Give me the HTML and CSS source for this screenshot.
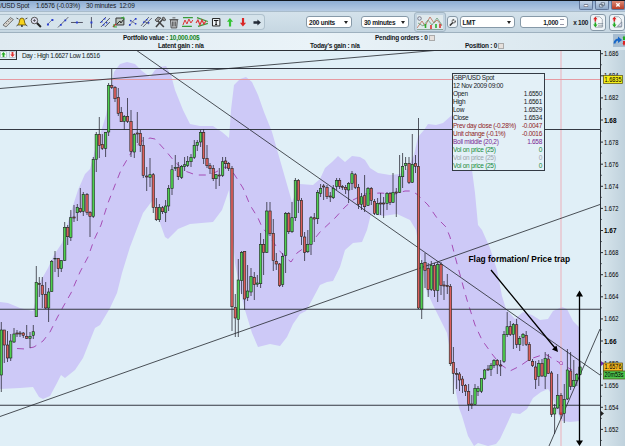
FILE: index.html
```html
<!DOCTYPE html>
<html lang="en">
  <head>
    <meta charset="UTF-8" />
    <meta name="viewport" content="width=device-width, initial-scale=1.0" />
    <title>GBP/USD Spot</title>
    <link rel="stylesheet" href="styles.css">
  </head>
  <body>
    <header class="titlebar">
      <span class="title-name">P/USD Spot</span>
      <span class="title-price">1.6576 (-0.03%)</span>
      <span class="title-time">30 minutes&nbsp; 12:09</span>
      <div class="window-buttons">
        <button aria-label="Minimize"><svg viewBox="0 0 14 9"><path d="M4.500 5.500h5" stroke="#556" stroke-width="3"/><path d="M5 5.500h4" stroke="#fff" stroke-width="1.600"/></svg></button>
        <button aria-label="Restore"><svg viewBox="0 0 14 9"><path d="M6 2h4v3H6zM4 4h4v3H4z" fill="#dfe8f1" stroke="#4c5a6c" stroke-width=".8"/></svg></button>
        <button class="close" aria-label="Close"><svg viewBox="0 0 14 9"><path d="M5 2.500l4 4M9 2.500l-4 4" stroke="#fff" stroke-width="1.600"/></svg></button>
      </div>
    </header>

    <div class="toolbar">
      <div class="tools">
        <svg viewBox="0 0 14 14"><path d="M2 10L9.500 2.500l3 2L5 12z" fill="#d5d2cc" stroke="#666" stroke-width=".9"/><path d="M5 8l1 1M7 6l1 1M9 4l1 1" stroke="#555" stroke-width=".6"/></svg>
        <svg viewBox="0 0 14 14"><path d="M3 10Q4.500 8 4.500 6a2.500 3 0 0 1 5 0q0 2 1.500 4z" fill="#f5d21c" stroke="#6d5a10" stroke-width=".9"/><path d="M1.500 3l2 1M12.500 3l-2 1M1.500 11l1.500-1M12.500 11L11 10" stroke="#222" stroke-width=".8"/><circle cx="7" cy="11" r="1" fill="#333"/></svg>
        <svg viewBox="0 0 14 14"><circle cx="5.500" cy="5.500" r="3.300" fill="#dde" stroke="#555"/><path d="M8 8l4 4" stroke="#222" stroke-width="2"/><path d="M4 5.500h3M5.500 4v3" stroke="#444" stroke-width=".7"/></svg>
        <svg viewBox="0 0 14 14"><path d="M5 9l4-4" stroke="#557" stroke-width=".7"/><path d="M4 8.500h2v2H4zM8.500 4h2v2h-2z" fill="#2a3fd0"/></svg>
        <svg viewBox="0 0 14 14"><path d="M2 12.500L12.500 2" stroke="#445" stroke-width=".8"/><path d="M4 9h1.800v1.800H4zM8.500 4.500h1.800v1.800H8.500z" fill="#2a3fd0"/></svg>
        <svg viewBox="0 0 14 14"><path d="M1 7.500h12" stroke="#334" stroke-width=".8"/><path d="M6 6.500h2v2H6z" fill="#2a3fd0"/></svg>
        <svg viewBox="0 0 14 14"><path d="M7.500 2v11" stroke="#334" stroke-width=".8"/><path d="M6.500 6.500h2v2h-2z" fill="#2a3fd0"/></svg>
        <svg viewBox="0 0 14 14"><path d="M2 8l6-6M3 12l9-9M7 12l5-5" stroke="#445" stroke-width=".9"/><path d="M3 6h1.500v1.500H3zM8 7h1.500v1.500H8zM5 9h1.500v1.500H5zM6 3h1.500v1.500H6z" fill="#2a3fd0"/></svg>
        <svg viewBox="0 0 14 14"><path d="M4 3h8v7H4z" fill="#bbc5c0" stroke="#333"/><path d="M5 9l3-3 1 2 3-4" stroke="#222" fill="none"/><path d="M1 12l3-3" stroke="#c33" stroke-width="1.500"/><path d="M9 3l3-1v3M2 9v3h3" stroke="#3a3" fill="none"/></svg>
        <svg viewBox="0 0 14 14"><path d="M3 11l7-8M4 5l6 4" stroke="#557" stroke-width=".7"/><path d="M3 9h1.700v1.700H3zM9 3h1.700v1.700H9zM4 5h1.500v1.500H4zM9 8h1.500v1.500H9z" fill="#2a3fd0"/></svg>
        <svg viewBox="0 0 14 14"><path d="M2 11l8-9M4 12l9-9M5 6l5 3" stroke="#445" stroke-width=".8"/><path d="M4 6.500h1.500V8H4zM7 4h1.500v1.500H7zM9 7h1.500v1.500H9z" fill="#2a3fd0"/></svg>
        <svg viewBox="0 0 14 14"><path d="M3 12l7-8M4 5l7 7" stroke="#444" stroke-width="1.600"/><path d="M2 5l3-3 3 1-4 4zM9 3l2-1 2 3-2 1z" fill="#999" stroke="#333" stroke-width=".7"/></svg>
        <svg viewBox="0 0 14 14"><path d="M3.500 5h7l-.7 8H4.200z" fill="#c9cdd0" stroke="#444" stroke-width=".9"/><path d="M2.500 4.500h9M5.500 2.800h3M5.500 6.500v5M7 6.500v5M8.500 6.500v5" stroke="#444" stroke-width=".8"/></svg>
        <svg viewBox="0 0 14 14"><path d="M2 2.500h10M1 11.500h10" stroke="#3a9b3a" stroke-width="1.300"/><path d="M2 10l2-5 2 4 2-5 2 4 2-3" stroke="#d33" fill="none"/></svg>
        <svg viewBox="0 0 14 14"><path d="M2 2.500l11 4M3 11.500l10-3" stroke="#3a9b3a" stroke-width="1.300"/><path d="M1 8l2-3 2 5 2-5 2 4 2-3" stroke="#d33" stroke-width="1.200" fill="none"/></svg>
        <svg viewBox="0 0 14 14"><path d="M3.500 3.500h7.500v7.500H3.500z" fill="#eef3f6" stroke="#222"/><path d="M5 5.500h4.500M7.200 5.500v4M6.200 9.500h2" stroke="#111" stroke-width="1"/></svg>
        <svg viewBox="0 0 14 14"><path d="M7 3L4 6.800h2V11.500h2.200V6.800h2z" fill="#35c435"/></svg>
        <svg viewBox="0 0 14 14"><path d="M7 11.500L4 7.800h2V3h2.200v4.800h2z" fill="#d92626"/></svg>
        <svg viewBox="0 0 14 14"><path d="M11 7.500L7.500 4.500v1.700H3.500v2.600h4v1.700z" fill="#222a36"/></svg>
      </div>
      <div class="select units">200 units<i></i></div>
      <div class="select period">30 minutes<i></i></div>
      <button class="chart-button" aria-label="Indicators"><svg viewBox="0 0 26 15"><path d="M0 13L5 6l3 5 5-9 4 6 3-3 5 6" fill="none" stroke="#bd6a55" stroke-width=".8"/><path d="M1 8l5 3 5-6 4 5 5-7 5 7" fill="none" stroke="#6a9a78" stroke-width=".8"/><path d="M8.500 9v4M19 9v4" stroke="#2cae2c" stroke-width="1.600"/><path d="M14 10v4M23 9v4" stroke="#d33" stroke-width="1.600"/><circle cx="2.500" cy="3.500" r="1.800" fill="#dce6f2" stroke="#667" stroke-width=".8"/><path d="M0 14.500h26" stroke="#687" stroke-width=".7"/></svg></button>
      <button class="wrench" aria-label="Settings"><svg viewBox="0 0 10 10"><path d="M2 8.500l4-4" stroke="#333" stroke-width="1.600"/><path d="M8.500 3.200A2 2 0 1 1 6.500 1.500L6.300 3l1 .6z" fill="#fff" stroke="#333" stroke-width=".8"/></svg></button>
      <div class="select order">LMT<i></i></div>
      <div class="quantity">1,000<i></i></div>
      <span class="times">x 100</span>
      <button class="ticket" aria-label="Buy"><svg viewBox="0 0 16 16"><path d="M5 2h5l3 3v9H5z" fill="#f5f7f8" stroke="#89929b" stroke-width=".8"/><path d="M8 10h6M8 12.500h6" stroke="#678" stroke-width=".8"/><path d="M5 2L2.500 5h1.600v2.500h1.800V5h1.600z" fill="#d22"/><path d="M5 14l-2.500-3h1.600V8.500h1.800V11h1.600z" fill="#2a2"/></svg></button>
      <button class="ticket last" aria-label="Sell"><svg viewBox="0 0 16 16"><path d="M5 2h5l3 3v9H5z" fill="#f5f7f8" stroke="#89929b" stroke-width=".8"/><path d="M8.500 13l5-5v5z" fill="#dde" stroke="#678" stroke-width=".8"/><path d="M5 2L2.500 5h1.600v2.500h1.800V5h1.600z" fill="#d22"/><path d="M5 14l-2.500-3h1.600V8.500h1.800V11h1.600z" fill="#2a2"/></svg></button>
    </div>

    <div class="account">
      <div class="account-col first">
        <p>Portfolio value : <b class="gain">10,000.00$</b></p>
        <p class="latent">Latent gain : n/a</p>
      </div>
      <div class="account-col today">
        <p>&nbsp;</p>
        <p>Today's gain : n/a</p>
      </div>
      <div class="account-col pending">
        <p>Pending orders : 0<i class="list-icon"></i></p>
        <p>&nbsp;</p>
      </div>
      <div class="account-col position">
        <p>&nbsp;</p>
        <p>Position : 0<i class="list-icon"></i></p>
      </div>
      <div class="switch"><svg viewBox="0 0 12 13"><path d="M1.500 9.500Q2 5.500 6 5.500" fill="none" stroke="#1767c8" stroke-width="2"/><path d="M5 2.500L9 6 5 9z" fill="#1767c8"/><path d="M11 1.500L9.500 4h3zM10 4h3v2h-3z" fill="#2a2"/><path d="M11 12L9.500 9h3zM10 7h3v2h-3z" fill="#d22"/></svg></div>
    </div>

    <main class="chart">
      <svg class="plot" id="plot" viewBox="0 0 625 396" width="625" height="396">
        <defs>
          <linearGradient id="axisFill" x1="0" x2="1" y1="0" y2="0">
            <stop offset="0" stop-color="#d8e6ed" />
            <stop offset="1" stop-color="#bfd1dc" />
          </linearGradient>
        </defs>
        <path class="band" d="M0 252L8 253 20 258 33 261 37 245 40 232 48 218 54 205 62 193 70 165 78 140 85 124 90 119 95 100 100 85 106 65 110 42 114 22 120 14 127 12 135 14 142 21 150 27 155 20 160 17 166 16 171 25 175 40 183 60 190 74 200 76 213 76 222 82 229 88 230 75 231 60 234 35 240 29 246 27 252 32 258 45 264 62 272 82 280 110 290 145 292 152 297 140 300 134 313 135 320 129 325 118 332 112 338 106 345 112 352 106 360 107 365 110 370 118 378 123 390 125 400 124 408 118 414 105 418 87 424 80 428 74 436 75 443 73 452 65 465 85 472 120 475 143 478 175 482 180 490 198 497 220 502 246 506 259 515 269 523 262 532 265 540 270 548 269 553 261 562 257 567 259 573 271 580 278 580 371 570 372 562 371 557 362 552 345 548 339 541 342 533 348 527 359 520 364 512 363 507 374 500 389 496 394 488 396 478 393 474 396 468 386 462 366 459 358 455 337 452 313 447 283 433 255 425 237 420 203 416 180 410 170 397 164 383 166 371 164 367 180 362 192 353 193 345 200 340 217 333 231 327 232 320 235 312 250 306 261 300 264 293 274 287 287 280 296 270 294 258 297 252 283 245 260 240 240 235 213 232 180 229 140 222 160 213 172 190 174 178 179 168 189 165 187 160 173 157 157 152 151 143 163 138 176 130 197 122 223 117 243 110 258 100 275 95 278 83 308 75 320 65 328 61 325 57 333 50 346 43 349 39 347 33 337 20 338 0 339z" />
        <path class="middle" d="M17 298.500L25 299 34 297 43 291 50 282 57 268 63 257 71 243 80 222 88 207 94 190 101 175 108 153 115 135 121 120 128 108 134 98 142 91 150 88 155 89 165 100 175 112 185 121 196 125 207 125 216 122 225 117 230 118 236 127 243 138 250 155 258 168 262 177 270 187 278 199 285 207 291 212 297 203 304 198 312 192 320 182 335 168 345 157 353 150 365 144 380 143 395 144 405 141 412 141 418 145 428 155 437 168 446 177 450 187 456 210 462 232 467 250 475 275 482 290 492 304 500 314 510 321 520 316 530 309 545 304 560 313 572 320" />
        <path class="crosshair" d="M561 1V396" />
        <path class="last-high" d="M0 29.500H600" />
        <path class="level" d="M0 18.500H600M0 79.500H600M0 259.300H600M0 355.300H600" />
        <path class="trend" d="M0 38.500L440 0M136 0L600 325M0 366.500L600 154.500M549 396L600 279" />
        <g id="candles"></g>
        <circle class="marker" cx="561" cy="313" r="1.500" />
        <circle class="marker-red" cx="561" cy="363.500" r="1.200" />
        <path class="arrow" d="M491 220L555 298M579.500 244V391" />
        <path class="arrow-head" d="M558 302L552 299.500 556.500 295.500zM579.500 240.500L576 246.500h7zM579.500 396L576 390.500h7z" />
        <text class="note" x="468.500" y="212" textLength="101.500">Flag formation/ Price trap</text>
        <rect class="axis" x="600.500" y="0" width="25" height="396" fill="url(#axisFill)" />
        <path class="axis-line" d="M600.500 0V396" />
        <g id="axisLabels"></g>
        <path d="M601 311l3 2.500-3 2.500z" fill="#7030b0" />
        <path d="M601 361l3 2.500-3 2.500z" fill="#222" />
        <path class="frame" d="M0 .5H601" />
      </svg>

      <div class="day">
        <span class="day-icons">
          <svg viewBox="0 0 7 7"><rect x=".4" y=".4" width="6.200" height="6.200" rx="1" fill="#f4faf4" stroke="#9ab" stroke-width=".7"/><path d="M3.500 1L1.300 3.500h1.300V6h1.800V3.500h1.300z" fill="#2a2"/></svg>
          <svg viewBox="0 0 7 7"><rect x=".4" y=".4" width="6.200" height="6.200" rx="1" fill="#faf4f4" stroke="#9ab" stroke-width=".7"/><path d="M3.500 6L1.300 3.500h1.300V1h1.800v2.500h1.300z" fill="#d33"/></svg>
        </span>
        <span class="day-text">Day : High 1.6627 Low 1.6516</span>
      </div>

      <div class="tooltip">
        <div><span>GBP/USD Spot</span></div>
        <div><span>12 Nov 2009 09:00</span></div>
        <div><span>Open</span><span>1.6550</span></div>
        <div><span>High</span><span>1.6561</span></div>
        <div><span>Low</span><span>1.6529</span></div>
        <div><span>Close</span><span>1.6534</span></div>
        <div class="down"><span>Prev day close (-0.28%)</span><span>-0.0047</span></div>
        <div class="down"><span>Unit change (-0.1%)</span><span>-0.0016</span></div>
        <div class="boll"><span>Boll middle (20,2)</span><span>1.658</span></div>
        <div class="vol"><span>Vol on price (25)</span><span>0</span></div>
        <div class="muted"><span>Vol on price (25)</span><span>0</span></div>
        <div class="vol"><span>Vol on price (25)</span><span>0</span></div>
      </div>
    </main>

    <script src="chart.js"></script>
  </body>
</html>
```
FILE: chart.js
```js
const SVG_NS = "http://www.w3.org/2000/svg";

// x, wick top, wick bottom, body top, body bottom, rising
const candles = [
  [1.3, 272, 342, 280, 325, 1], [4.3, 280, 313, 280, 295, 0], [7.5, 281, 312, 295, 308, 0],
  [10.7, 284, 311, 291, 308, 1], [14, 278, 293, 284, 292, 1], [17, 280, 287, 283, 284, 0],
  [20, 281, 287, 283, 284, 0], [23.3, 282, 288, 283, 285.3, 0], [26.7, 275, 289, 286.3, 288.3, 0],
  [30, 282, 298, 286.3, 288.3, 1], [33.3, 275, 289, 281.7, 285.3, 1], [36.3, 216, 267, 232.3, 266.7, 1],
  [39.3, 227, 247, 233.5, 234.5, 0], [42.3, 227, 258, 235.3, 244.3, 0], [45.7, 232, 259, 244.3, 258, 0],
  [48.6, 238, 272, 242, 258, 1], [51.7, 210, 242, 211.3, 241.7, 1], [55, 201, 222, 208.3, 209, 1],
  [58.3, 208, 227, 208.3, 218.7, 0], [61.3, 210, 222, 210.7, 218.7, 1], [64.7, 172, 211, 177.3, 210.3, 1],
  [67.7, 175, 195, 177.3, 186.7, 0], [70.8, 160, 191, 167.7, 187.3, 1], [74, 155, 172, 167, 168, 0],
  [77.3, 154, 171, 157.3, 162.7, 1], [80.3, 138, 163, 158.3, 161.7, 0], [83.3, 142, 166, 144.3, 161.3, 1],
  [87, 143, 165, 144.3, 162.3, 0], [90, 161, 187, 162.3, 166.3, 0], [93.3, 107, 168, 109.3, 166.3, 1],
  [96.3, 82, 122, 84.3, 109.3, 1], [99.3, 67, 108, 84.3, 95.3, 0], [102.3, 84, 100, 94.3, 98.3, 0],
  [105.6, 82, 107, 82.3, 98.3, 1], [108.6, 33, 86, 35.3, 82, 1], [111.7, 19, 39, 35.3, 37.3, 0],
  [115, 36, 52, 37.3, 48.7, 0], [118.3, 38, 66, 47.3, 63.3, 0], [121.3, 57, 72, 62.3, 71.7, 0],
  [124.3, 65, 80, 66.3, 71.3, 1], [127.5, 48, 73, 66.3, 71.3, 0], [131, 60, 107, 71.3, 101.3, 0],
  [134.3, 83, 108, 84.3, 102, 1], [137.3, 62, 93, 83, 84, 0], [140.3, 80, 102, 83.3, 95.3, 0],
  [143.3, 87, 128, 95.3, 125.3, 0], [146.7, 117, 141, 126, 127, 0], [150, 108, 137, 124.7, 127.3, 1],
  [153.3, 123, 163, 124.7, 157.3, 0], [156.4, 148, 171, 157.3, 169.7, 0], [159.4, 154, 172, 157.3, 169.7, 1],
  [162.5, 156, 164, 157.7, 161.7, 0], [165.6, 150, 172, 156, 162.3, 1], [168.6, 135, 161, 138.3, 156, 1],
  [172, 115, 145, 119.7, 138.3, 1], [175.3, 105, 121, 117.3, 118.3, 1], [178.3, 112, 130, 117.3, 126.7, 0],
  [181.6, 115, 129, 116.3, 127.3, 1], [184.6, 107, 121, 114.7, 116.3, 1], [187.6, 106, 117, 111.3, 115.3, 1],
  [191, 104, 117, 107.3, 111.7, 1], [194.3, 90, 109, 95.3, 107.3, 1], [197.3, 90, 101, 92.3, 95.3, 1],
  [200.6, 80, 97, 82.3, 92, 1], [203.6, 79, 114, 82.3, 108.3, 0], [207, 95, 118, 108.3, 115.7, 0],
  [210, 113, 124, 115.7, 118.7, 0], [213.3, 115, 131, 118.3, 128.7, 0], [216, 124, 139, 124.7, 128.7, 1],
  [219.3, 118, 136, 125, 126, 0], [222.6, 107, 127, 111.7, 125.3, 1], [225.6, 107, 119, 111, 113.7, 0],
  [228.6, 112, 121, 113.3, 118.3, 0], [232, 116, 281, 118.3, 256.7, 0], [235.3, 244, 287, 257.3, 268, 0],
  [238.3, 209, 287, 230, 269.3, 1], [241.6, 201, 244, 202.3, 230.7, 1], [244.6, 201, 260, 201.3, 249, 0],
  [247.6, 215, 251, 241, 247.3, 1], [251, 218, 246, 226.7, 242, 1], [254.3, 222, 250, 227.3, 234.7, 0],
  [257.3, 225, 237, 233, 234.2, 1], [260.6, 183, 238, 194.3, 233.7, 1], [263.6, 189, 225, 194.3, 202.3, 0],
  [266.8, 152, 203, 161, 202.3, 1], [270, 152, 186, 161, 183.7, 0], [273.3, 169, 221, 183.3, 210.7, 0],
  [276.3, 203, 220, 211.3, 214, 0], [279.6, 213, 237, 214, 235.7, 0], [282.6, 203, 237, 206.3, 234.7, 1],
  [285.6, 162, 223, 163.3, 205.3, 1], [288.7, 162, 184, 163.3, 181.7, 0], [292, 152, 183, 167.7, 181.7, 1],
  [295.4, 128, 171, 130.3, 167.7, 1], [298.4, 129, 163, 130.3, 150.3, 0], [301.5, 148, 195, 150.3, 186.3, 0],
  [304.6, 182, 211, 187, 202.3, 0], [307.8, 180, 203, 194.3, 201.7, 1], [311, 166, 205, 167.7, 194.3, 1],
  [314.3, 163, 192, 167.7, 169, 0], [317.6, 140, 174, 142.3, 168.7, 1], [320.6, 134, 147, 138.3, 143.3, 1],
  [323.6, 134, 150, 136, 137, 0], [327, 135, 149, 137.3, 146.7, 0], [330.3, 142, 152, 146, 147, 0],
  [333.3, 135, 149, 138.3, 147.7, 1], [336.6, 128, 140, 130.3, 136.3, 1], [339.6, 128, 139, 130.3, 136.3, 0],
  [342.4, 135, 140, 136.3, 137.3, 0], [345.6, 135, 144, 137.3, 139.3, 0], [348.6, 132, 153, 133.3, 140, 1],
  [352, 121, 140, 123.7, 133.3, 1], [355.3, 123, 139, 124.7, 137.3, 0], [358.5, 134, 159, 137.3, 154.3, 0],
  [361.5, 143, 160, 146.7, 154.3, 1], [364.6, 125, 162, 145.7, 156.7, 0], [368, 137, 156, 138.3, 155.3, 1],
  [371.3, 137, 155, 138.3, 150.3, 0], [374.5, 149, 165, 151.3, 163.3, 0], [377.6, 148, 165, 153.3, 164.3, 1],
  [380.6, 143, 165, 153, 154, 0], [383.6, 147, 168, 153, 154, 0], [387, 142, 160, 143.3, 153.3, 1],
  [390, 142, 155, 143.3, 152.3, 0], [393, 123, 153, 142.3, 152.3, 1], [396.3, 138, 167, 142, 143, 0],
  [399.6, 105, 143, 126.7, 142.3, 1], [402.6, 103, 138, 116.3, 126.7, 1], [405.6, 107, 120, 113.3, 115.3, 1],
  [409, 107, 134, 113.3, 132.3, 0], [412.3, 84, 133, 114.3, 132.3, 1], [415.5, 105, 123, 113.3, 116.3, 0],
  [418.5, 68, 259, 116.3, 258, 0], [421.7, 210, 269, 213.3, 259, 1], [425, 203, 238, 212.3, 220.3, 0],
  [428.2, 213, 247, 218.3, 239.7, 0], [431.3, 211, 241, 215.3, 239.7, 1], [434.5, 213, 247, 215.3, 240.3, 0],
  [437.7, 212, 252, 214.3, 240.7, 1], [441, 212, 245, 214.3, 235.3, 0], [444, 231, 250, 235, 236, 0],
  [447.3, 224, 244, 235.5, 236.5, 0], [450.4, 234, 316, 236.3, 313.7, 0], [453.4, 297, 344, 312.3, 323.3, 0],
  [456.6, 318, 339, 323.5, 324.5, 0], [459.5, 322, 341, 324, 330, 0], [462.5, 326, 343, 329, 335.3, 0],
  [465.5, 334, 346, 335.3, 341.3, 0], [468.6, 334, 361, 341.3, 354.3, 0], [471.8, 345, 359, 354, 355, 0],
  [475, 334, 355, 338.3, 354.3, 1], [478, 336, 346, 338.3, 341.7, 1], [481.5, 328, 343, 328.3, 341.3, 1],
  [484.6, 319, 330, 320, 328.3, 1], [488, 315, 321, 319, 320, 0], [491, 313, 326, 315.3, 319.3, 1],
  [494, 309, 318, 310.3, 315.3, 1], [497.3, 309, 324, 310.3, 315, 0], [500.6, 310, 326, 315, 316, 0],
  [504, 281, 313, 284.3, 311.3, 1], [507.2, 262, 287, 276.7, 284.7, 1], [510.3, 271, 286, 276.3, 284.7, 0],
  [513.4, 273, 299, 274.3, 284.3, 1], [516.6, 269, 298, 274.7, 294.3, 0], [519.7, 286, 301, 288.3, 294.3, 1],
  [523, 283, 296, 284.3, 287.3, 1], [526.2, 281, 296, 285.3, 294.3, 0], [529.3, 292, 311, 294.3, 310.7, 0],
  [532.5, 309, 317, 311.3, 315.7, 0], [535.6, 311, 339, 317, 329.3, 0], [538.8, 310, 336, 313.3, 326.3, 1],
  [542, 309, 327, 313.3, 326, 0], [545.2, 302, 339, 308.3, 326.3, 1], [548.3, 304, 324, 309, 323.3, 0],
  [551.5, 321, 367, 323, 364.3, 0], [554.6, 354, 384, 358, 364, 1], [557.7, 324, 359, 345.3, 358, 1],
  [561, 343, 369, 345.3, 364.3, 0], [564.3, 334, 373, 349.3, 363.3, 1], [567.4, 299, 350, 320, 349, 1],
  [570.6, 302, 340, 321, 336.3, 0], [573.8, 310, 337, 330.3, 336.7, 1], [576.8, 323, 336, 324.3, 330.3, 1],
  [580, 312, 325, 317, 324.3, 1],
];

function add(parent, name, attrs, text) {
  const el = document.createElementNS(SVG_NS, name);
  for (const key in attrs) el.setAttribute(key, attrs[key]);
  if (text) el.textContent = text;
  parent.appendChild(el);
  return el;
}

function drawCandles() {
  const group = document.getElementById("candles");
  candles.forEach(([x, high, low, top, bottom, up]) => {
    add(group, "path", { class: "wick", d: `M${x} ${high}V${low}` });
    add(group, "rect", {
      class: up ? "candle up" : "candle down",
      x: x - 1.2,
      y: top,
      width: 2.4,
      height: Math.max(bottom - top, 0.6),
    });
  });
}

function drawAxis() {
  const group = document.getElementById("axisLabels");
  const step = 22.1;
  for (let i = 0; i < 18; i++) {
    const y = 3.7 + i * step;
    const price = String((1686 - i * 2) / 1000);
    const whole = i % 5 === 3;
    add(group, "path", { class: "axis-line", d: `M600 ${y}h3M600 ${y + step / 2}h1.700` });
    add(group, "text", {
      class: whole ? "axis-text whole" : "axis-text",
      x: 604,
      y: y + 2.5,
      textLength: whole ? 12.5 : 14.5,
      lengthAdjust: "spacingAndGlyphs",
    }, price);
  }

  const tags = [
    [25.5, 19, "#f5ee18", "1.6835", 17],
    [313, 19, "#f5b820", "1.6576", 17],
    [321, 24, "#4cc34c", "20m53s", 19],
  ];
  tags.forEach(([y, width, fill, text, length]) => {
    add(group, "rect", { class: "tag", x: 603.5, y, width, height: 8, fill });
    add(group, "text", {
      class: "axis-text",
      x: 604.5,
      y: y + 6.4,
      textLength: length,
      lengthAdjust: "spacingAndGlyphs",
    }, text);
  });
}

drawCandles();
drawAxis();
```
FILE: styles.css
```css
:root {
  --ink: #15191d;
  --plot: #e0eff7;
  --band: #cdc9f7;
  --up: #4fd04f;
  --down: #dc5f5c;
  --border: #8699a8;
}

* {
  box-sizing: border-box;
}

body {
  margin: 0;
  width: 625px;
  height: 446px;
  overflow: hidden;
  font-family: "Liberation Sans", Arial, sans-serif;
  font-size: 6.5px;
  color: var(--ink);
  background: var(--plot);
}

button {
  padding: 0;
  border: 1px solid var(--border);
  background: #edf3f7;
}

p {
  margin: 0;
}

svg {
  display: block;
}

.titlebar {
  display: flex;
  height: 11px;
  border-top: 1px solid #10161d;
  background: linear-gradient(#8eaed4, #b6cbe3);
  line-height: 10px;
  letter-spacing: -0.18px;
  white-space: nowrap;
}

.title-name {
  width: 36px;
  text-indent: -4px;
}

.title-price {
  width: 50px;
}

.window-buttons {
  display: flex;
  gap: 2px;
  margin-left: auto;
}

.window-buttons button {
  width: 14px;
  height: 9px;
  border-color: #62779a;
  border-top: 0;
  border-radius: 0 0 2px 2px;
  background: linear-gradient(#c7d6e8, #8fa9ca);
}

.window-buttons .close {
  background: linear-gradient(#dd8b78, #b83c26);
}

.toolbar {
  display: flex;
  align-items: center;
  height: 21px;
  border-top: 1px solid #a9bccb;
  background: linear-gradient(#d4e2eb, #c6d7e2);
  font-weight: bold;
}

.tools {
  display: flex;
  width: 266px;
  height: 16px;
  padding-left: 1px;
  margin-right: 41px;
  align-items: center;
  border: 1px solid #afc1cd;
  border-left: 0;
  border-radius: 0 4px 4px 0;
  background: #d5e3eb;
}

.tools svg {
  width: 13.85px;
  height: 14px;
}

.select,
.quantity {
  display: flex;
  align-items: center;
  justify-content: space-between;
  height: 12px;
  padding: 0 3px 0 2px;
  border: 1px solid var(--border);
  border-radius: 3px;
  background: #fff;
  letter-spacing: -0.25px;
  white-space: nowrap;
}

.select i {
  border: 2px solid transparent;
  border-top: 3px solid #222;
  border-bottom: 0;
}

.units {
  width: 46px;
  margin-right: 9px;
}

.period {
  width: 48px;
  margin-right: 5px;
}

.chart-button {
  width: 32px;
  height: 20px;
  border-color: #a3b6c4;
  border-radius: 3px;
  background: #c3d4e1;
}

.chart-button svg {
  width: 26px;
  height: 15px;
  margin: auto;
  background: #dfe9ec;
}

.wrench {
  width: 11px;
  height: 12px;
  margin: 0 2px 0 1px;
  border-radius: 3px;
}

.order {
  width: 56px;
  margin-right: 5px;
}

.quantity {
  width: 48px;
  justify-content: flex-end;
  gap: 2px;
  margin-right: 5px;
}

.quantity i {
  width: 4px;
  height: 6px;
  border-top: 1px solid #99a;
  border-bottom: 1px solid #99a;
}

.times {
  width: 17px;
  white-space: nowrap;
  letter-spacing: -0.25px;
}

.ticket {
  width: 16px;
  height: 17px;
  margin-right: 3px;
  border-radius: 3px;
}

.ticket.last {
  margin-right: 0;
}

.account {
  display: flex;
  height: 18px;
  border-top: 1px solid #9eb1bf;
  background: linear-gradient(90deg, #dfeaf1, #eaf3f8 50%, #d7e5ed);
  font-weight: bold;
  line-height: 8px;
  letter-spacing: -0.25px;
  white-space: nowrap;
}

.account-col {
  padding-top: 1px;
}

.first {
  width: 310px;
  padding-left: 123px;
}

.latent {
  padding-left: 35px;
}

.today {
  width: 65px;
}

.pending {
  width: 90px;
}

.gain {
  color: #12851d;
}

.list-icon {
  display: inline-block;
  width: 6px;
  height: 6px;
  margin-left: 1px;
  border: 1px solid #aaa;
  background: #e6e0dc;
  vertical-align: -1px;
}

.switch {
  width: 12px;
  height: 13px;
  margin: 1px 0 0 auto;
  background: #a7bdd0;
}

.chart {
  position: relative;
  height: 396px;
}

.band {
  fill: var(--band);
}

.middle {
  fill: none;
  stroke: #a03fae;
  stroke-width: 0.9;
  stroke-dasharray: 7 6;
}

.crosshair {
  fill: none;
  stroke: #e9b9c3;
  stroke-width: 1.2;
}

.last-high {
  fill: none;
  stroke: #e59aa2;
  stroke-width: 1;
}

.level {
  fill: none;
  stroke: #343943;
  stroke-width: 1.1;
}

.trend {
  fill: none;
  stroke: #22262c;
  stroke-width: 0.8;
}

.wick {
  stroke: #22222c;
  stroke-width: 0.75;
}

.candle {
  stroke: #1d2420;
  stroke-width: 0.6;
}

.candle.up {
  fill: var(--up);
}

.candle.down {
  fill: var(--down);
}

.marker {
  fill: #f3e4fb;
  stroke: #a03fae;
  stroke-width: 0.7;
}

.marker-red {
  fill: #c33;
}

.arrow {
  fill: none;
  stroke: #000;
  stroke-width: 1.3;
}

.note {
  font-size: 8.4px;
  font-weight: bold;
}

.axis-line,
.frame {
  fill: none;
  stroke: #2b3036;
  stroke-width: 1;
}

.axis-text {
  font-size: 6.8px;
}

.whole {
  font-weight: bold;
}

.tag {
  stroke: #55510f;
  stroke-width: 0.7;
}

.day {
  position: absolute;
  top: 1px;
  left: 0;
  display: flex;
  align-items: center;
  height: 9px;
  white-space: nowrap;
}

.day-icons {
  display: flex;
  gap: 2px;
  width: 17px;
  height: 9px;
  border-right: 1px solid #333;
  border-bottom: 1px solid #333;
}

.day-icons svg {
  width: 7px;
  height: 7px;
}

.day-text {
  padding-left: 5px;
  letter-spacing: -0.35px;
}

.tooltip {
  position: absolute;
  top: 23px;
  left: 452px;
  width: 93px;
  height: 98px;
  border: 1px solid #333a44;
  background: #e3f0f7;
  line-height: 8px;
  white-space: nowrap;
  letter-spacing: -0.28px;
}

.tooltip div {
  display: flex;
  justify-content: space-between;
  padding-right: 2px;
}

.tooltip .down {
  color: #8f2226;
}

.tooltip .boll {
  color: #7a1f92;
}

.tooltip .vol {
  color: #178a3c;
}

.tooltip .muted {
  color: #9aa5ad;
}
```
